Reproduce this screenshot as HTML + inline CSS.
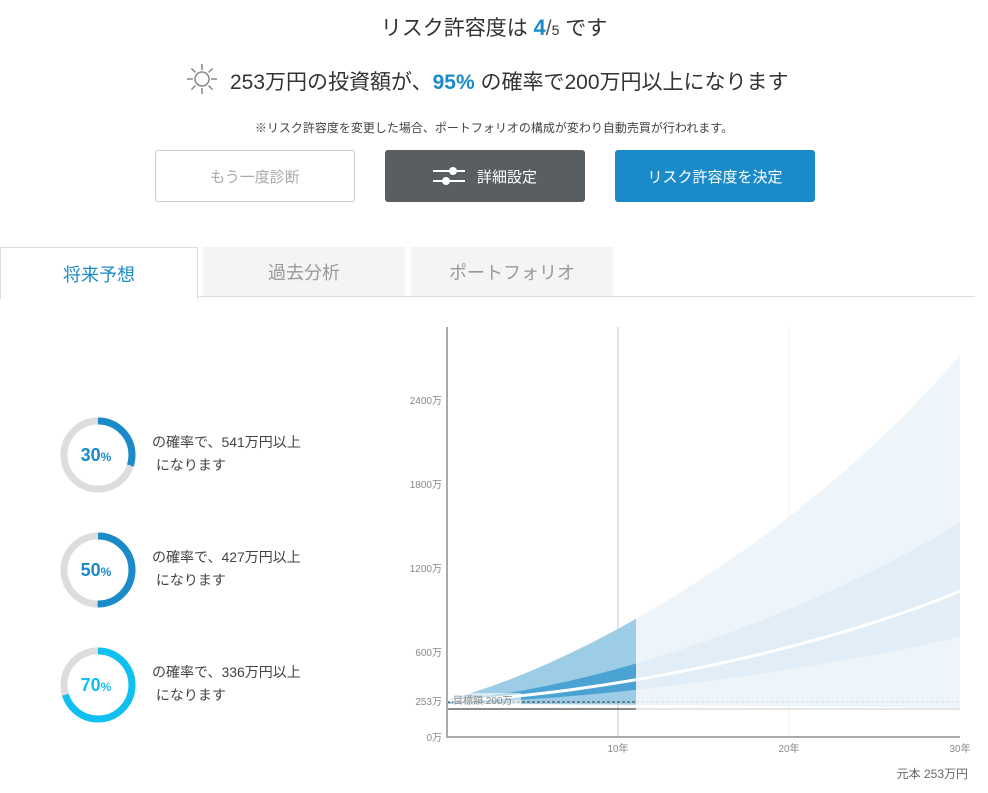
<!DOCTYPE html><html><head><meta charset="utf-8"><style>
body{margin:0;width:988px;height:793px;background:#fff;font-family:"Liberation Sans","Noto Sans CJK JP",sans-serif;color:#333;position:relative;overflow:hidden}
.a{position:absolute}
.btn{position:absolute;top:150px;width:200px;height:52px;box-sizing:border-box;border-radius:3px;display:flex;align-items:center;justify-content:center;font-size:15px}
.tab{position:absolute;top:247px;height:50px;display:flex;align-items:center;justify-content:center;font-size:18px;color:#999;background:#f4f4f4}
.lbl{position:absolute;left:152px;font-size:14px;line-height:23px;color:#444}
.ax{font-size:10px;fill:#888}
</style></head><body>
<div class="a" style="left:0;width:988px;top:12px;text-align:center;font-size:21px;color:#333">リスク許容度は <b style="color:#1a8ac8;font-size:22px">4</b><span style="color:#555">/</span><span style="font-size:14px">5</span> です</div>
<svg class="a" style="left:185px;top:62px" width="34" height="34" viewBox="0 0 34 34" stroke="#888" stroke-width="1.5" fill="none"><circle cx="17" cy="17" r="7"/><path d="M17 2v6M17 26v6M2 17h6M26 17h6M6.4 6.4l4 4M23.6 23.6l4 4M6.4 27.6l4-4M23.6 10.4l4-4"/></svg>
<div class="a" style="left:230px;top:66px;font-size:21px;color:#333">253万円の投資額が、<b style="color:#1a8ac8">95%</b> の確率で200万円以上になります</div>
<div class="a" style="left:0;width:988px;top:119px;text-align:center;font-size:12px;color:#444">※リスク許容度を変更した場合、ポートフォリオの構成が変わり自動売買が行われます。</div>
<div class="btn" style="left:155px;border:1px solid #ccc;color:#aaa">もう一度診断</div>
<div class="btn" style="left:385px;background:#595e63;color:#fff"><svg width="32" height="22" style="margin-right:12px" viewBox="0 0 32 22"><path d="M0 6h32M0 16h32" stroke="#fff" stroke-width="2"/><circle cx="20" cy="6" r="4" fill="#fff"/><circle cx="13" cy="16" r="4" fill="#fff"/></svg>詳細設定</div>
<div class="btn" style="left:615px;background:#1a8ac8;color:#fff">リスク許容度を決定</div>
<div class="a" style="left:0;top:247px;width:196px;height:51px;border:1px solid #ddd;border-bottom:none;background:#fff;display:flex;align-items:center;justify-content:center;font-size:18px;color:#1a8ac8;z-index:2">将来予想</div>
<div class="tab" style="left:203px;width:202px">過去分析</div>
<div class="tab" style="left:411px;width:202px">ポートフォリオ</div>
<div class="a" style="left:197px;top:296px;width:778px;height:1px;background:#ddd"></div>
<svg class="a" style="left:60px;top:417px" width="76" height="306">
<g fill="none" stroke-width="7"><circle cx="38" cy="38" r="34" stroke="#ddd"/><circle cx="38" cy="38" r="34" stroke="#1a8ac8" stroke-dasharray="64 300" transform="rotate(-90 38 38)"/>
<circle cx="38" cy="153" r="34" stroke="#ddd"/><circle cx="38" cy="153" r="34" stroke="#1a8ac8" stroke-dasharray="107 300" transform="rotate(-90 38 153)"/>
<circle cx="38" cy="268" r="34" stroke="#ddd"/><circle cx="38" cy="268" r="34" stroke="#10c0f0" stroke-dasharray="150 300" transform="rotate(-90 38 268)"/></g>
<g font-weight="bold" font-size="18" text-anchor="middle" font-family="Liberation Sans,sans-serif"><text x="36" y="44" fill="#1a8ac8">30<tspan font-size="12">%</tspan></text><text x="36" y="159" fill="#1a8ac8">50<tspan font-size="12">%</tspan></text><text x="36" y="274" fill="#10c0f0">70<tspan font-size="12">%</tspan></text></g></svg>
<div class="lbl" style="top:431px">の確率で、541万円以上<br>&nbsp;になります</div>
<div class="lbl" style="top:546px">の確率で、427万円以上<br>&nbsp;になります</div>
<div class="lbl" style="top:661px">の確率で、336万円以上<br>&nbsp;になります</div>
<svg class="a" style="left:380px;top:320px" width="608" height="473" viewBox="380 320 608 473">
<defs><clipPath id="c"><rect x="447" y="320" width="189" height="420"/></clipPath></defs>
<line x1="618" y1="327" x2="618" y2="737" stroke="#e4e4e4" stroke-width="2"/>
<line x1="789" y1="327" x2="789" y2="737" stroke="#f0f0f0"/>
<path d="M447 700 C600 660,820 520,960 355 L960 708 C800 706,600 704,447 704Z" fill="#eef5fa"/>
<path d="M447 700 C600 690,820 610,960 522 L960 637 C820 670,600 700,447 703Z" fill="#e2eef7"/>
<g clip-path="url(#c)"><path d="M447 700 C600 660,820 520,960 355 L960 708 C800 706,600 704,447 704Z" fill="#9dcce6"/><path d="M447 700 C600 690,820 610,960 522 L960 637 C820 670,600 700,447 703Z" fill="#4ba3d3"/></g>
<path d="M447 701 C600 695,820 650,960 591" stroke="#fff" stroke-width="3" fill="none"/>
<line x1="447" y1="709" x2="636" y2="709" stroke="#666" stroke-width="1.5"/><line x1="636" y1="709" x2="960" y2="709" stroke="#ddd" stroke-width="1.5"/>
<line x1="447" y1="702" x2="636" y2="702" stroke="#333" stroke-dasharray="3 2"/><line x1="636" y1="702" x2="960" y2="702" stroke="#ddd" stroke-dasharray="3 2"/>
<rect x="453" y="693" width="68" height="14" fill="#fff" opacity=".6"/><text x="453" y="704" class="ax" font-size="11">目標額 200万</text>
<path d="M447 327V737H960" stroke="#aaa" stroke-width="2" fill="none"/>
<g class="ax" text-anchor="end"><text x="442" y="404">2400万</text><text x="442" y="488">1800万</text><text x="442" y="572">1200万</text><text x="442" y="656">600万</text><text x="442" y="705">253万</text><text x="442" y="741">0万</text></g>
<g class="ax" text-anchor="middle"><text x="618" y="752">10年</text><text x="789" y="752">20年</text><text x="960" y="752">30年</text></g>
<text x="968" y="778" text-anchor="end" font-size="12" fill="#666">元本 253万円</text>
</svg>
</body></html>
